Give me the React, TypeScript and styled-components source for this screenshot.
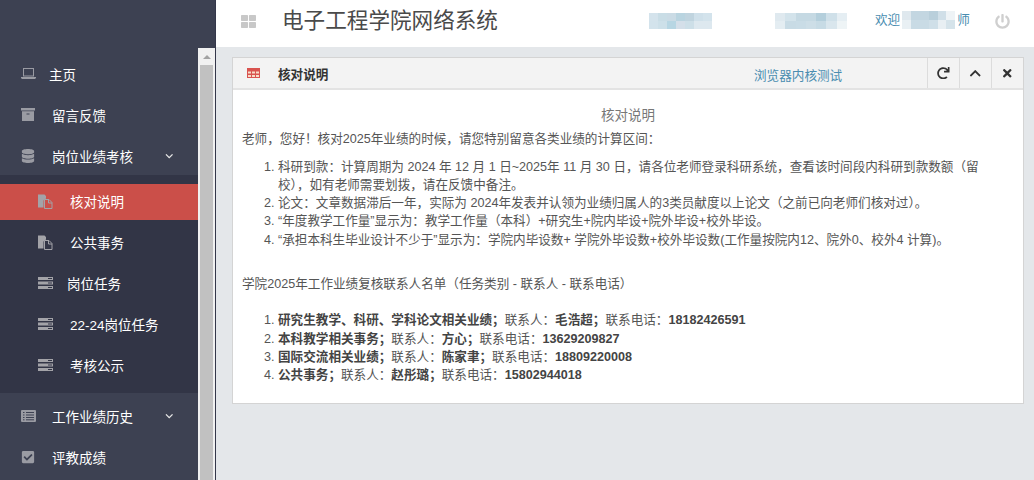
import styled, { createGlobalStyle } from "styled-components";
import { ReactNode } from "react";
import {
  FaCheckSquare,
  FaChevronDown,
  FaChevronUp,
  FaDatabase,
  FaPowerOff,
  FaRedo,
  FaThLarge,
  FaTimes,
} from "react-icons/fa";

const GlobalStyle = createGlobalStyle`
  html, body {
    margin: 0;
    padding: 0;
    height: 480px;
    overflow: hidden;
    background: #e4e7ea;
    font-family: "Liberation Sans", "Noto Sans CJK SC", sans-serif;
    font-size: 13.5px;
  }
  * { box-sizing: border-box; }
`;

const Page = styled.div`
  display: flex;
  width: 1034px;
  height: 480px;
  overflow: hidden;
`;

const Sidebar = styled.aside`
  width: 216px;
  flex: none;
  display: flex;
  background: #3d4152;
  border-right: 1px solid #34374a;
`;

const Nav = styled.nav`
  width: 198px;
  flex: none;
  padding-top: 54px;
`;

const NavItem = styled.div`
  height: 41px;
  display: flex;
  align-items: center;
  padding: 0 0 2px 21px;
  color: #fff;
`;

const NavIcon = styled.span`
  width: 31px;
  flex: none;
  display: flex;
  align-items: center;
  color: #9a9ba3;
  font-size: 14px;
`;

const NavLabel = styled.span<{ $shift?: number }>`
  margin-left: ${({ $shift }) => $shift ?? 0}px;
`;

const Caret = styled(FaChevronDown)`
  margin: 2px 25px 0 auto;
  font-size: 8.5px;
  color: #e6e6e6;
`;

const SubNav = styled.div`
  margin-top: -2px;
  padding: 9px 0;
  background: #323546;
  display: flex;
  flex-direction: column;
  gap: 5px;
`;

const SubItem = styled.div<{ $active?: boolean }>`
  height: 36px;
  display: flex;
  align-items: center;
  padding: 0 0 2px 38px;
  color: #fff;
  background: ${({ $active }) => ($active ? "#cb4f49" : "transparent")};
`;

const SubIcon = styled.span`
  width: 32px;
  flex: none;
  display: flex;
  align-items: center;
  color: #a3a3a8;
`;

const LowerGroup = styled.div`
  padding-top: 3px;
`;

const Scrollbar = styled.div`
  width: 17px;
  margin-top: 48px;
  background: #f1f1f1;
  display: flex;
  flex-direction: column;
  align-items: center;
`;

const ScrollArrow = styled.div`
  height: 17px;
  width: 100%;
  display: flex;
  align-items: center;
  justify-content: center;

  &::before {
    content: "";
    border-left: 4px solid transparent;
    border-right: 4px solid transparent;
    border-bottom: 4px solid #a3a3a3;
  }
`;

const ScrollThumb = styled.div`
  width: 13px;
  flex: 1;
  background: #c1c1c1;
`;

const Main = styled.main`
  flex: 1;
  min-width: 0;
  display: flex;
  flex-direction: column;
`;

const TopBar = styled.header`
  height: 47px;
  flex: none;
  background: #fff;
  display: flex;
  align-items: center;
  padding: 0 0 5px 25px;
`;

const GridIcon = styled(FaThLarge)`
  color: #c8c8c8;
  font-size: 15px;
  flex: none;
`;

const Title = styled.h1`
  margin: 0 0 0 26px;
  font-size: 21.6px;
  font-weight: 400;
  color: #4a4a4a;
  line-height: 1;
  width: 367px;
  flex: none;
`;

const Mosaic = styled.div<{ $width: number; $height: number; $cols: number; $left?: number }>`
  width: ${({ $width }) => $width}px;
  height: ${({ $height }) => $height}px;
  margin-left: ${({ $left }) => $left ?? 0}px;
  flex: none;
  display: grid;
  grid-template-columns: repeat(${({ $cols }) => $cols}, 1fr);
  grid-auto-rows: 1fr;
`;

const MosaicCell = styled.div<{ $color: string }>`
  background: ${({ $color }) => $color};
`;

const Welcome = styled.div`
  margin: -2px 0 0 28px;
  display: flex;
  align-items: center;
  gap: 2px;
  color: #4a8db0;
  font-size: 12.6px;
  line-height: 18px;
  width: 96px;
  flex: none;
`;

const PowerIcon = styled(FaPowerOff)`
  margin-left: 24px;
  color: #cfcfcf;
  font-size: 15px;
  flex: none;
`;

const Content = styled.div`
  flex: 1;
  padding: 10px 10px 0 16px;
`;

const Panel = styled.section`
  height: 347px;
  background: #fff;
  border: 1px solid #d4d4d4;
`;

const PanelHead = styled.div`
  height: 32px;
  display: flex;
  align-items: center;
  background: #f3f3f3;
  border-bottom: 2px solid #e3e3e3;
  padding-left: 14px;
`;

const PanelTitle = styled.b`
  margin-left: 18px;
  color: #333;
  font-size: 12.6px;
  width: 476px;
  flex: none;
`;

const BrowserTest = styled.span`
  color: #4a8db0;
  font-size: 12.6px;
  margin-top: 2px;
`;

const PanelTools = styled.div`
  margin-left: auto;
  display: flex;
  height: 100%;
`;

const ToolButton = styled.div`
  width: 32px;
  display: flex;
  align-items: center;
  justify-content: center;
  border-left: 1px solid #dcdcdc;
  color: #333;
  font-size: 12.5px;
`;

const PanelBody = styled.div`
  padding: 17px 9px 0;
  color: #555;
  font-size: 12.6px;
  line-height: 18.3px;
`;

const Heading = styled.div`
  text-align: center;
  color: #777;
  font-size: 13.5px;
`;

const Para = styled.p<{ $top: number }>`
  margin: ${({ $top }) => $top}px 0 0;
`;

const OrderedList = styled.ol<{ $top: number }>`
  margin: ${({ $top }) => $top}px 0 0;
  padding: 0 30px 0 36px;
`;

const Strong = styled.b`
  color: #444;
`;

const Blob = ({ width, height, cols, colors, left }: { width: number; height: number; cols: number; colors: string[]; left?: number }) => (
  <Mosaic $width={width} $height={height} $cols={cols} $left={left}>
    {colors.map((color, i) => (
      <MosaicCell key={i} $color={color} />
    ))}
  </Mosaic>
);

const LaptopIcon = () => (
  <svg width="15" height="11" viewBox="0 0 15 11">
    <rect x="2.500" y="0.500" width="10" height="7.500" fill="none" stroke="currentColor" />
    <path d="M0 9h15v1l-1 1H1l-1-1z" fill="currentColor" />
  </svg>
);

const ArchiveIcon = () => (
  <svg width="14" height="13" viewBox="0 0 14 13" fill="currentColor">
    <rect x="0" y="0" width="14" height="2.500" />
    <path d="M1 3.200h12V13H1zM5.500 5.500v1h3v-1z" fillRule="evenodd" />
  </svg>
);

const FilesIcon = () => (
  <svg width="15" height="15" viewBox="0 0 15 15" fill="currentColor">
    <path d="M0 0.500h6.500L8 2v2.500L5.500 6.500v7H0z" />
    <path d="M6.500 5.500H11l3 3v6H6.500z" fill="none" stroke="currentColor" />
    <path d="M10.500 5.500v3.500h3.500" fill="none" stroke="currentColor" />
  </svg>
);

const ServerIcon = () => (
  <svg width="15" height="12" viewBox="0 0 15 12" fill="currentColor">
    <path d="M0 0h15v3H0zM0 4.500h15v3H0zM0 9h15v3H0z" />
    <path d="M10 1h4v1h-4zM10 5.500h4v1h-4zM10 10h4v1h-4z" fill="#323546" />
  </svg>
);

const ListIcon = () => (
  <svg width="15" height="12" viewBox="0 0 15 12">
    <rect width="15" height="12" rx="1" fill="#9a9ba3" />
    <path d="M2 2.500h1.500M5 2.500h8M2 5h1.500M5 5h8M2 7.500h1.500M5 7.500h8M2 9.800h1.500M5 9.800h8" stroke="#3d4152" />
  </svg>
);

const TableIcon = () => (
  <svg width="13" height="10" viewBox="0 0 13 10" style={{ flex: "none" }}>
    <rect width="13" height="10" fill="#d9534f" />
    <path d="M1 3.500h3v2H1zM5 3.500h3v2H5zM9 3.500h3v2H9zM1 7h3v2H1zM5 7h3v2H5zM9 7h3v2H9z" fill="#f7dcc8" />
  </svg>
);

const MenuItem = ({ icon, label, shift, caret }: { icon: ReactNode; label: string; shift?: number; caret?: boolean }) => (
  <NavItem>
    <NavIcon>{icon}</NavIcon>
    <NavLabel $shift={shift}>{label}</NavLabel>
    {caret && <Caret />}
  </NavItem>
);

const SubMenuItem = ({ icon, label, shift, active }: { icon: ReactNode; label: string; shift?: number; active?: boolean }) => (
  <SubItem $active={active}>
    <SubIcon>{icon}</SubIcon>
    <NavLabel $shift={shift}>{label}</NavLabel>
  </SubItem>
);

const BLOB_A = ["#d4e3ec", "#c9dde6", "#cadbe5", "#b9d4e0", "#c0d4df", "#cfe0ea", "#d3e3ec", "#d3e3ec", "#cde0e9", "#b7d6e3", "#d4dfe9", "#cddfe8", "#dde8ef", "#dde8ef"];
const BLOB_B = ["#dfe9ef", "#d3e3eb", "#c5d9e3", "#c5d9e3", "#b4cfdc", "#cfe0e9", "#e5eef3", "#e4edf2", "#c8dbe5", "#c9dce6", "#cddee7", "#c7dbe5", "#d9e6ed", "#eef4f6"];
const BLOB_C = ["#dfe8ee", "#c3d6e1", "#c3d6e1", "#b9cfdb", "#d0dfe8", "#eef3f6", "#e9f0f4", "#c9dbe5", "#c9dbe5", "#cfdfe8", "#e8eff3", "#d5e3ea"];

const App = () => (
  <Page>
    <GlobalStyle />
    <Sidebar>
      <Nav>
        <MenuItem icon={<LaptopIcon />} label="主页" shift={-3} />
        <MenuItem icon={<ArchiveIcon />} label="留言反馈" />
        <MenuItem icon={<FaDatabase />} label="岗位业绩考核" caret />
        <SubNav>
          <SubMenuItem icon={<FilesIcon />} label="核对说明" active />
          <SubMenuItem icon={<FilesIcon />} label="公共事务" />
          <SubMenuItem icon={<ServerIcon />} label="岗位任务" shift={-3} />
          <SubMenuItem icon={<ServerIcon />} label="22-24岗位任务" />
          <SubMenuItem icon={<ServerIcon />} label="考核公示" />
        </SubNav>
        <LowerGroup>
          <MenuItem icon={<ListIcon />} label="工作业绩历史" caret />
          <MenuItem icon={<FaCheckSquare />} label="评教成绩" />
        </LowerGroup>
      </Nav>
      <Scrollbar>
        <ScrollArrow />
        <ScrollThumb />
      </Scrollbar>
    </Sidebar>
    <Main>
      <TopBar>
        <GridIcon />
        <Title>电子工程学院网络系统</Title>
        <Blob width={63} height={16} cols={7} colors={BLOB_A} />
        <Blob width={72} height={16} cols={7} colors={BLOB_B} left={63} />
        <Welcome>
          欢迎
          <Blob width={53} height={18} cols={6} colors={BLOB_C} />
          师
        </Welcome>
        <PowerIcon />
      </TopBar>
      <Content>
        <Panel>
          <PanelHead>
            <TableIcon />
            <PanelTitle>核对说明</PanelTitle>
            <BrowserTest>浏览器内核测试</BrowserTest>
            <PanelTools>
              <ToolButton><FaRedo /></ToolButton>
              <ToolButton><FaChevronUp /></ToolButton>
              <ToolButton><FaTimes /></ToolButton>
            </PanelTools>
          </PanelHead>
          <PanelBody>
            <Heading>核对说明</Heading>
            <Para $top={5}>老师，您好！核对2025年业绩的时候，请您特别留意各类业绩的计算区间：</Para>
            <OrderedList $top={9}>
              <li>科研到款：计算周期为 2024 年 12 月 1 日~2025年 11 月 30 日，请各位老师登录科研系统，查看该时间段内科研到款数额（留校），如有老师需要划拨，请在反馈中备注。</li>
              <li>论文：文章数据滞后一年，实际为 2024年发表并认领为业绩归属人的3类员献度以上论文（之前已向老师们核对过）。</li>
              <li>“年度教学工作量”显示为：教学工作量（本科）+研究生+院内毕设+院外毕设+校外毕设。</li>
              <li>“承担本科生毕业设计不少于”显示为：学院内毕设数+ 学院外毕设数+校外毕设数(工作量按院内12、院外0、校外4 计算)。</li>
            </OrderedList>
            <Para $top={26}>学院2025年工作业绩复核联系人名单（任务类别 - 联系人 - 联系电话）</Para>
            <OrderedList $top={18}>
              <li><Strong>研究生教学、科研、学科论文相关业绩；</Strong>联系人：<Strong>毛浩超；</Strong>联系电话：<Strong>18182426591</Strong></li>
              <li><Strong>本科教学相关事务；</Strong>联系人：<Strong>方心；</Strong>联系电话：<Strong>13629209827</Strong></li>
              <li><Strong>国际交流相关业绩；</Strong>联系人：<Strong>陈家聿；</Strong>联系电话：<Strong>18809220008</Strong></li>
              <li><Strong>公共事务；</Strong>联系人：<Strong>赵彤璐；</Strong>联系电话：<Strong>15802944018</Strong></li>
            </OrderedList>
          </PanelBody>
        </Panel>
      </Content>
    </Main>
  </Page>
);

export default App;
